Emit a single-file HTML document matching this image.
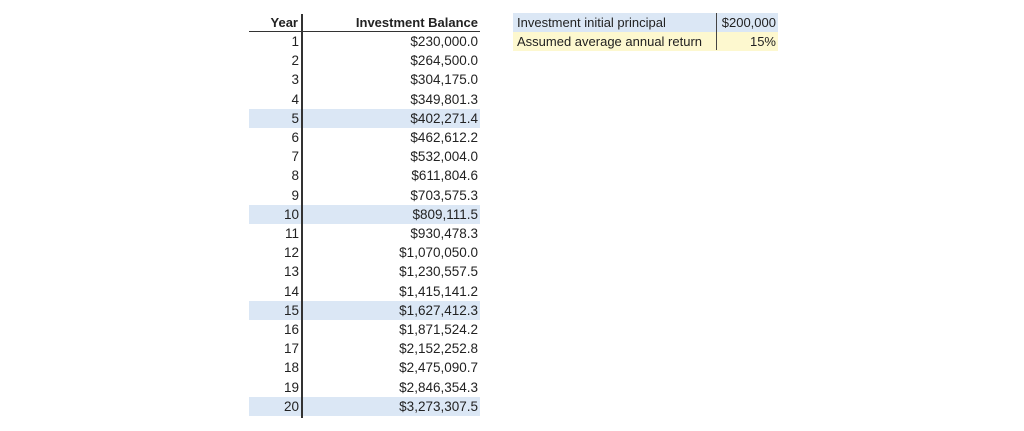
<!DOCTYPE html>
<html><head><style>
body{margin:0;width:1024px;height:431px;background:#fff;font-family:"Liberation Sans",Arial,sans-serif;color:#222;position:relative;overflow:hidden}
.r{position:absolute;left:249px;width:231px;height:19.2px;font-size:13.5px;line-height:19.2px}
.r.h{background:#dbe7f5}
.y{position:absolute;right:181px;}
.b{position:absolute;right:2px;}
.hd{position:absolute;top:13px;left:249px;width:231px;height:18px;font-weight:bold;font-size:13px;line-height:19px;border-bottom:1.5px solid #333}
.vl{position:absolute;left:301px;top:14px;width:1.5px;height:404px;background:#333}
.t{position:absolute;left:513px;width:265px;height:19px;font-size:13px;line-height:19px}
.t span{position:absolute;right:2px}
.t i{font-style:normal;position:absolute;left:4px}
.dv{position:absolute;left:716px;top:13px;width:1.2px;height:37px;background:#444}
</style></head><body>
<div class="hd"><span class="y" style="right:182px">Year</span><span class="b">Investment Balance</span></div>
<div id="rows"></div>
<div class="r" style="top:32px"><span class="y">1</span><span class="b">$230,000.0</span></div>
<div class="r" style="top:51.2px"><span class="y">2</span><span class="b">$264,500.0</span></div>
<div class="r" style="top:70.4px"><span class="y">3</span><span class="b">$304,175.0</span></div>
<div class="r" style="top:89.6px"><span class="y">4</span><span class="b">$349,801.3</span></div>
<div class="r h" style="top:108.8px"><span class="y">5</span><span class="b">$402,271.4</span></div>
<div class="r" style="top:128px"><span class="y">6</span><span class="b">$462,612.2</span></div>
<div class="r" style="top:147.2px"><span class="y">7</span><span class="b">$532,004.0</span></div>
<div class="r" style="top:166.4px"><span class="y">8</span><span class="b">$611,804.6</span></div>
<div class="r" style="top:185.6px"><span class="y">9</span><span class="b">$703,575.3</span></div>
<div class="r h" style="top:204.8px"><span class="y">10</span><span class="b">$809,111.5</span></div>
<div class="r" style="top:224px"><span class="y">11</span><span class="b">$930,478.3</span></div>
<div class="r" style="top:243.2px"><span class="y">12</span><span class="b">$1,070,050.0</span></div>
<div class="r" style="top:262.4px"><span class="y">13</span><span class="b">$1,230,557.5</span></div>
<div class="r" style="top:281.6px"><span class="y">14</span><span class="b">$1,415,141.2</span></div>
<div class="r h" style="top:300.8px"><span class="y">15</span><span class="b">$1,627,412.3</span></div>
<div class="r" style="top:320px"><span class="y">16</span><span class="b">$1,871,524.2</span></div>
<div class="r" style="top:339.2px"><span class="y">17</span><span class="b">$2,152,252.8</span></div>
<div class="r" style="top:358.4px"><span class="y">18</span><span class="b">$2,475,090.7</span></div>
<div class="r" style="top:377.6px"><span class="y">19</span><span class="b">$2,846,354.3</span></div>
<div class="r h" style="top:396.8px"><span class="y">20</span><span class="b">$3,273,307.5</span></div>
<div class="vl"></div>
<div class="t" style="top:13px;background:#dbe7f5"><i>Investment initial principal</i><span>$200,000</span></div>
<div class="t" style="top:32px;background:#fdf8cf"><i>Assumed average annual return</i><span>15%</span></div>
<div class="dv"></div>
</body></html>
